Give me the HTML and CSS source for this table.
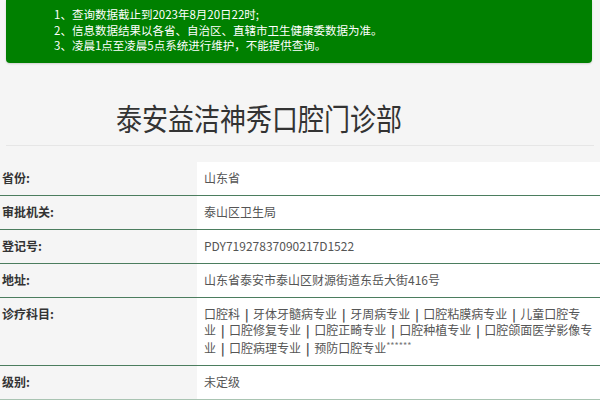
FILE: index.html
```html
<!DOCTYPE html>
<html lang="zh-CN">
<head>
<meta charset="utf-8">
<title>泰安益洁神秀口腔门诊部</title>
<link rel="stylesheet" href="styles.css">
</head>
<body>
<div class="notice">
  <ol class="notice-list">
    <li>1、查询数据截止到2023年8月20日22时;</li>
    <li>2、信息数据结果以各省、自治区、直辖市卫生健康委数据为准。</li>
    <li>3、凌晨1点至凌晨5点系统进行维护，不能提供查询。</li>
  </ol>
</div>
<h1 class="title">泰安益洁神秀口腔门诊部</h1>
<hr class="divider">
<table class="info">
  <colgroup><col class="col-label"><col></colgroup>
  <tr><th>省份:</th><td>山东省</td></tr>
  <tr><th>审批机关:</th><td>泰山区卫生局</td></tr>
  <tr><th>登记号:</th><td>PDY71927837090217D1522</td></tr>
  <tr><th>地址:</th><td>山东省泰安市泰山区财源街道东岳大街416号</td></tr>
  <tr><th>诊疗科目:</th><td>口腔科<span class="sep">|</span>牙体牙髓病专业<span class="sep">|</span>牙周病专业<span class="sep">|</span>口腔粘膜病专业<span class="sep">|</span>儿童口腔专<br>业<span class="sep">|</span>口腔修复专业<span class="sep">|</span>口腔正畸专业<span class="sep">|</span>口腔种植专业<span class="sep">|</span>口腔颌面医学影像专<br>业<span class="sep">|</span>口腔病理专业<span class="sep">|</span>预防口腔专业<span class="stars">******</span></td></tr>
  <tr><th>级别:</th><td>未定级</td></tr>
  <tr class="last"><th>&nbsp;</th><td>&nbsp;</td></tr>
</table>
</body>
</html>
```
FILE: styles.css
```css
html, body {
  margin: 0;
  padding: 0;
}
body {
  background: #f5f5f5;
  font-family: "Noto Sans CJK SC", "Microsoft YaHei", sans-serif;
  color: #333;
  font-size: 12px;
}
.notice {
  margin: 0 8px 0 6px;
  background: #008000;
  border-radius: 0 0 4px 4px;
  padding: 7px 0 9px 48px;
  box-shadow: 0 1px 2px rgba(0,0,0,0.15);
}
.notice-list {
  list-style: none;
  margin: 0;
  padding: 0;
  color: #fff;
  font-size: 11.5px;
  line-height: 15.5px;
}
.title {
  margin: 0 0 7px;
  padding: 29px 82px 0 0;
  text-align: center;
  font-size: 26px;
  line-height: 46px;
  font-weight: normal;
  color: #333;
  transform: scaleY(1.15);
}
.divider {
  margin: 0 6px;
  border: 0;
  border-top: 1px solid #e6e6e6;
}
.info {
  width: 100%;
  table-layout: fixed;
  border-collapse: collapse;
  margin-top: 16px;
}
.col-label {
  width: 197px;
}
.info th, .info td {
  border-bottom: 1px solid #4b7d5e;
  padding: 8.5px 4px 8.5px 7px;
  line-height: 16px;
  text-align: left;
  vertical-align: top;
}
.info th {
  padding-left: 2px;
  font-weight: bold;
  color: #333;
}
.info td {
  background: #fff;
  color: #555;
  white-space: nowrap;
}
.sep {
  margin: 0 4.5px 0 5px;
  color: #444;
  font-weight: bold;
}
.info tr:nth-child(6) th, .info tr:nth-child(6) td {
  border-bottom-color: #a9c4b2;
}
.info .last th, .info .last td {
  border-bottom: 0;
}
.stars {
  font-size: 9px;
  vertical-align: 4px;
  color: #777;
}
```
